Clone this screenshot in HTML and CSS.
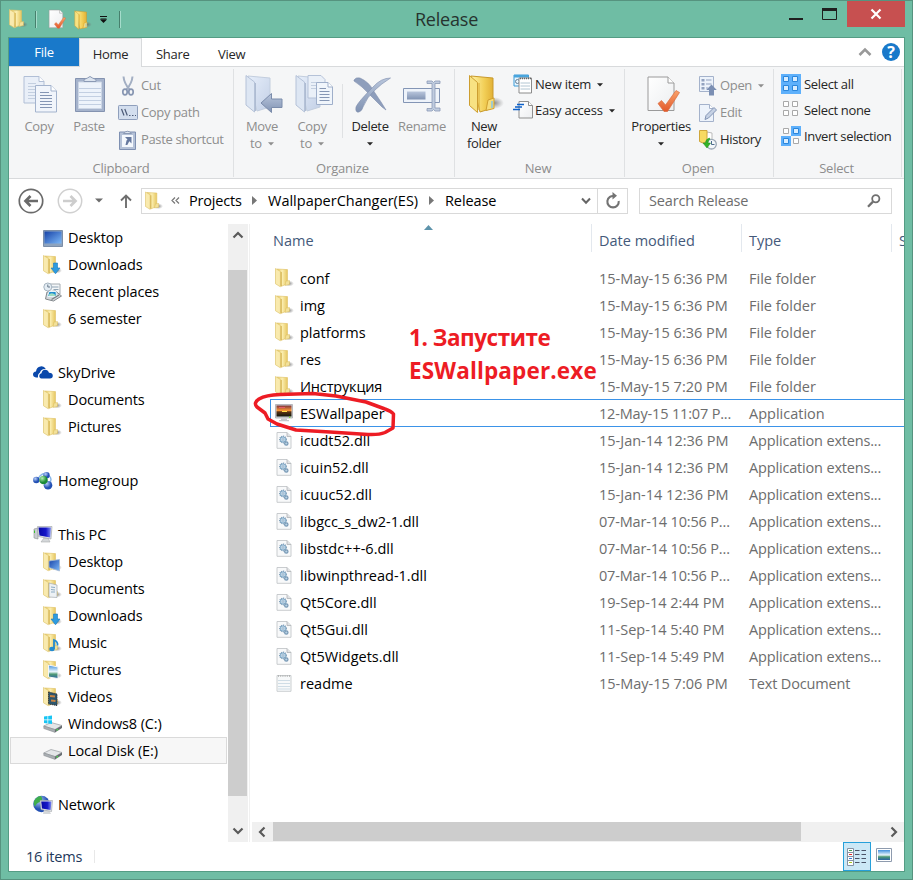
FILE: index.html
```html
<!DOCTYPE html>
<html lang="en">
<head>
<meta charset="utf-8">
<title>Release</title>
<link rel="stylesheet" href="styles.css">
</head>
<body>
<svg class="defs" width="0" height="0" aria-hidden="true">
  <defs>
    <linearGradient id="gy" x1="0" x2="1"><stop offset="0" stop-color="#e9cb69"/><stop offset=".5" stop-color="#fbeeb0"/><stop offset="1" stop-color="#e6c65f"/></linearGradient>
    <linearGradient id="gy2" x1="0" x2="1"><stop offset="0" stop-color="#fff3a8"/><stop offset=".6" stop-color="#f2cf57"/><stop offset="1" stop-color="#e2b136"/></linearGradient>
    <linearGradient id="gb" x1="0" x2="1" y2="1"><stop offset="0" stop-color="#e6eefa"/><stop offset="1" stop-color="#c3d0e6"/></linearGradient>
    <linearGradient id="gb2" x1="0" x2="0" y2="1"><stop offset="0" stop-color="#b9c6dc"/><stop offset="1" stop-color="#8193b3"/></linearGradient>
    <linearGradient id="gscreen" x1="0" x2="1" y2="1"><stop offset="0" stop-color="#1743a8"/><stop offset="1" stop-color="#7db9f8"/></linearGradient>
    <linearGradient id="gpc" x1="0" x2="1"><stop offset="0" stop-color="#0708a5"/><stop offset=".6" stop-color="#1616c9"/><stop offset="1" stop-color="#7f8df2"/></linearGradient>
    <linearGradient id="gsun" x1="0" x2="0" y2="1"><stop offset="0" stop-color="#7c3238"/><stop offset=".45" stop-color="#fb9837"/><stop offset=".58" stop-color="#5c3213"/><stop offset="1" stop-color="#10180f"/></linearGradient>
    <linearGradient id="gpaper" x1="0" x2="1" y2="1"><stop offset="0" stop-color="#fff"/><stop offset="1" stop-color="#eceef0"/></linearGradient>
    <linearGradient id="gsky" x1="0" x2="0" y2="1"><stop offset="0" stop-color="#3f8fdc"/><stop offset=".5" stop-color="#eaf6fd"/><stop offset=".68" stop-color="#4f9a74"/><stop offset="1" stop-color="#2b63a5"/></linearGradient>
    <radialGradient id="gblue" cx=".35" cy=".3"><stop offset="0" stop-color="#b9d0fb"/><stop offset="1" stop-color="#2350b4"/></radialGradient>
    <radialGradient id="ggreen" cx=".35" cy=".3"><stop offset="0" stop-color="#b5f0b0"/><stop offset="1" stop-color="#1b8b36"/></radialGradient>
    <linearGradient id="gor" x1="0" x2="0" y2="1"><stop offset="0" stop-color="#f9a36c"/><stop offset="1" stop-color="#e2582a"/></linearGradient>
    <radialGradient id="gsh"><stop offset="0" stop-color="#555" stop-opacity=".7"/><stop offset="1" stop-color="#777" stop-opacity="0"/></radialGradient>
  </defs>
  <symbol id="folder" viewBox="0 0 19 20">
    <ellipse cx="14" cy="15.500" rx="5" ry="3" fill="url(#gsh)"/>
    <path d="M2 1 12.500 1.600V15.800L6 18.400Z" fill="url(#gy)" stroke="#dfc164" stroke-width=".6"/>
    <path d="M11 13 14.500 12.600V16.600L10 17.400Z" fill="#f3e19a" stroke="#d9bb59" stroke-width=".5"/>
    <path d="M.5.5 5.400 3.400V18.800L.5 15.800Z" fill="#f9eaae" stroke="#e0c56f" stroke-width=".7"/>
    <path d="M6.200 4V18" stroke="#cfa943" stroke-width=".9"/>
  </symbol>
  <symbol id="folder-big" viewBox="0 0 36 40">
    <ellipse cx="26" cy="29" rx="10" ry="6" fill="url(#gsh)"/>
    <path d="M3 2 25 4V34L12 38Z" fill="url(#gy2)" stroke="#c99a2c"/>
    <path d="M20 26 26 24V34.500L18 36.500Z" fill="#f6dc78" stroke="#d0a030"/>
    <path d="M24 27V34" stroke="#7fc3ee" stroke-width="1.400"/>
    <path d="M1.500 1.500 9.500 8.500V38.500L1.500 31.500Z" fill="#f8e282" stroke="#cd9e30"/>
    <path d="M11 9V36" stroke="#e1b53c" stroke-width="2" opacity=".6"/>
  </symbol>
  <symbol id="folder-blue" viewBox="0 0 38 40">
    <path d="M3 2 25 4V33L12 37Z" fill="url(#gb)" stroke="#c3cede"/>
    <path d="M1 1.500 9.500 8V38L1 31Z" fill="#dde6f3" stroke="#b5c2d8"/>
    <path d="M10.500 9V37" stroke="#aebcd2"/>
  </symbol>
  <symbol id="check-page" viewBox="0 0 34 38">
    <path d="M2 2H22L28 8V35.500H2Z" fill="url(#gpaper)" stroke="#9a9a9a"/>
    <path d="M22 2V8H28" fill="#fff" stroke="#9a9a9a"/>
    <path d="M12 28.500 15.500 25.500 19.500 30 30 15.500 33.500 17.500 21.500 36.500H18Z" fill="url(#gor)" stroke="#d86c40" stroke-width=".7"/>
  </symbol>
  <symbol id="doc" viewBox="0 0 16 18">
    <path d="M1 1.500H11L15 5.500V17.300H1Z" fill="#f8f9fa" stroke="#c3c6c9" stroke-width=".9"/>
    <path d="M11 1.500V5.500H15" fill="#e0e2e4" stroke="#b0b3b6" stroke-width=".8"/>
  </symbol>
  <symbol id="dll" viewBox="0 0 16 18">
    <use href="#doc"/>
    <circle cx="7" cy="8.500" r="3.300" fill="none" stroke="#7798b4" stroke-width="1.200" stroke-dasharray="1.100 .8"/>
    <circle cx="7" cy="8.500" r="2.600" fill="#cfe2f0" stroke="#7ba6c6" stroke-width="1"/>
    <circle cx="7" cy="8.500" r=".9" fill="#fff" stroke="#5d87a9" stroke-width=".6"/>
    <circle cx="10.300" cy="12.500" r="1.700" fill="#b9d3e6" stroke="#7798b4" stroke-width="1.200"/>
  </symbol>
  <symbol id="txt" viewBox="0 0 16 18">
    <path d="M1 1.500H15V17.300H1Z" fill="#f7f9fa" stroke="#c5c9cc" stroke-width=".9"/>
    <path d="M2 2H14" stroke="#aaa" stroke-width="1.600" stroke-dasharray="1 1.200"/>
    <path d="M2 6.500H14M2 9.500H14M2 12.500H14M2 15H14" stroke="#cfdde6" stroke-width="1.200"/>
  </symbol>
  <symbol id="pages" viewBox="0 0 34 38">
    <path d="M1 1.500H16L21 6.500V28H1Z" fill="#e9eff8" stroke="#b1bfd6"/>
    <path d="M16 1.500V6.500H21" fill="#fff" stroke="#b1bfd6"/>
    <path d="M5 8.500H13M5 11.500H13M5 14.500H13M5 17.500H13M5 20.500H13M5 23.500H13" stroke="#c3cfe0"/>
    <path d="M12.500 10.500H28L33.500 16V37H12.500Z" fill="#f1f5fb" stroke="#a3b3cd"/>
    <path d="M28 10.500V16H33.500" fill="#fff" stroke="#a3b3cd"/>
    <path d="M17 17.500H26M17 20.500H29M17 23.500H29M17 26.500H29M17 29.500H29M17 32.500H29" stroke="#8596b4"/>
  </symbol>
  <symbol id="dd" viewBox="0 0 6 4"><path d="M0 .3H6L3 3.600Z" fill="currentColor"/></symbol>
  <symbol id="down-arrow" viewBox="0 0 19 20"><path d="M10.500 8H14.500V13H17L12.500 18.800 8 13H10.500Z" fill="#2d9be0" stroke="#1a78bd" stroke-width=".6"/></symbol>
  <symbol id="drive" viewBox="0 0 20 18">
    <path d="M.8 11 8 7.500 19 10.500 12 14.600Z" fill="#e4e6e8" stroke="#989ca0" stroke-width=".7"/>
    <path d="M.8 11V13.500L12 17.400V14.600Z" fill="#a9aeb2" stroke="#85898c" stroke-width=".5"/>
    <path d="M12 14.600 19 10.500V13L12 17.400Z" fill="#686e72"/>
    <path d="M13.500 15.300 15 14.400" stroke="#4be04b" stroke-width="1.300"/>
  </symbol>
</svg>

<div class="window">
  <header class="titlebar">
    <div class="quick">
      <svg class="q1" width="19" height="20"><use href="#folder"/></svg>
      <i class="qsep"></i>
      <svg class="q2" width="18" height="20"><use href="#check-page"/></svg>
      <svg class="q3" width="16" height="19" viewBox="0 0 32 38"><use href="#folder-big" width="36" height="40"/></svg>
      <svg class="q4" width="7" height="8" viewBox="0 0 7 8"><path d="M0 .5H7M.5 3H6.500" stroke="#111"/><path d="M0 3.500H7L3.500 7Z" fill="#111"/></svg>
      <i class="qsep q5"></i>
    </div>
    <h1>Release</h1>
    <div class="controls">
      <svg class="min" width="14" height="2"><rect width="14" height="2" fill="#1f1f1f"/></svg>
      <svg class="max" width="15" height="12"><path d="M.5.5H14.500V11.500H.5Z" fill="none" stroke="#1f1f1f"/><path d="M0 0H15V3H0Z" fill="#1f1f1f"/></svg>
      <span class="close"><svg width="12" height="10" viewBox="0 0 12 10"><path d="M1.500.5 10.500 9.500M10.500.5 1.500 9.500" stroke="#fff" stroke-width="2.200"/></svg></span>
    </div>
  </header>

  <main class="client">
    <nav class="tabs">
      <span class="tab file">File</span>
      <span class="tab home">Home</span>
      <span class="tab share">Share</span>
      <span class="tab view">View</span>
      <span class="tabright">
        <svg width="14" height="9" viewBox="0 0 14 9"><path d="M1.500 7 7 1.500 12.500 7" fill="none" stroke="#999" stroke-width="2.600"/></svg>
        <span class="help">?</span>
      </span>
    </nav>

    <section class="ribbon">
      <div class="group g-clip">
        <div class="items">
          <div class="big off"><svg width="34" height="38"><use href="#pages"/></svg><span>Copy</span></div>
          <div class="big off"><svg width="32" height="38" viewBox="0 0 32 38"><path d="M1.500 3.500H30.500V36.500H1.500Z" fill="#a5b3cc" stroke="#8493b0"/><path d="M4.500 7H27.500V33.500H4.500Z" fill="#edf3fb" stroke="#cdd7e6"/><path d="M5 13.500H27M5 17.500H27M5 21.500H27M5 25.500H27M5 29.500H27" stroke="#c2cfe2"/><path d="M10 6.500V4.500L13.500 3Q16 0 18.500 3L22 4.500V6.500Z" fill="#dce4ef" stroke="#8b9ab5"/></svg><span>Paste</span></div>
          <div class="smalls r27 c1">
            <div class="small off"><svg width="20" height="20" viewBox="0 0 20 20"><path d="M5.500.5Q6 7 11.500 13.500M14.500.5Q14 7 8.500 13.500" fill="none" stroke="#a3afc3" stroke-width="2"/><ellipse cx="7" cy="16" rx="2.200" ry="2.800" fill="none" stroke="#8796b2" stroke-width="1.700"/><ellipse cx="13" cy="16" rx="2.200" ry="2.800" fill="none" stroke="#8796b2" stroke-width="1.700"/></svg><span>Cut</span></div>
            <div class="small off"><svg width="20" height="16" viewBox="0 0 20 16"><rect x=".5" y=".5" width="19" height="14" rx=".8" fill="#d3deee" stroke="#8f9fbc"/><path d="M3.500 4 6 10.500M6.800 4 9.300 10.500M11 10.500H12.500M14 10.500H15.500M17 10.500H18" stroke="#4c5b78" stroke-width="1.200"/></svg><span>Copy path</span></div>
            <div class="small off"><svg width="20" height="20" viewBox="0 0 20 20"><path d="M1.500 2H17.500V19.500H1.500Z" fill="#b4c1d7" stroke="#7e90b2"/><path d="M4 5H15V17H4Z" fill="#f4f8fd"/><path d="M5.500 3.500Q9.500-1 13.500 3.500Z" fill="#dce4ef" stroke="#8b9ab5"/><path d="M7 7H13.500V13.500L11.300 11.300 9.300 15H7.500L8.500 10.500 9.500 9.500Z" fill="#66799f"/></svg><span>Paste shortcut</span></div>
          </div>
        </div>
        <div class="caption">Clipboard</div>
      </div>

      <div class="group g-org">
        <div class="items">
          <div class="big off"><svg width="38" height="40"><use href="#folder-blue"/><path d="M16 29 26.500 19.500V25H37V33.500H26.500V38.500Z" fill="url(#gb2)" stroke="#7b8cab"/></svg><span>Move<br>to <svg class="dd" width="6" height="4"><use href="#dd"/></svg></span></div>
          <div class="big off"><svg width="38" height="40"><use href="#folder-blue"/><path d="M13 1.500H26L30 5.500V24H13Z" fill="#eaf0f8" stroke="#b5c2d8"/><path d="M16 8.500H24M16 11.500H24M16 14.500H22" stroke="#c3cfe0"/><path d="M21.500 8.500H33L37.500 13V30.500H21.500Z" fill="#f0f5fb" stroke="#9fafca"/><path d="M33 8.500V13H37.500" fill="#fff" stroke="#9fafca"/><path d="M24.500 14.500H31M24.500 17.500H34.500M24.500 20.500H34.500M24.500 23.500H34.500M24.500 26.500H34.500" stroke="#8596b4"/></svg><span>Copy<br>to <svg class="dd" width="6" height="4"><use href="#dd"/></svg></span></div>
          <i class="isep"></i>
          <div class="big"><svg width="38" height="38" viewBox="0 0 38 38"><path d="M1 5Q3 2 7 3 16 7 20 15L28 27 33 35 29 32 17 20Q9 11 1 6Z" fill="#8e9ebc" stroke="#7d8dac" stroke-width=".6"/><path d="M37.500 3Q28 3 20 12 5 27 3 32 2 38 6 37 9 36 10 32 14 22 22 15 28 9 37.500 3Z" fill="url(#gb2)" stroke="#7d8dac" stroke-width=".6"/></svg><span>Delete<br><svg class="dd mid" width="6" height="4"><use href="#dd"/></svg></span></div>
          <div class="big off wide"><svg width="38" height="38" viewBox="0 0 38 38"><path d="M.5 13.500H36.500V27.500H.5Z" fill="#eef3fa" stroke="#8395b5"/><path d="M4 16.500H22.500V24.500H4Z" fill="url(#gb2)"/><path d="M24 6H29L30.500 7.500 32 6H37V8.500H32V33H37V36H32L30.500 34.500 29 36H24V33.500H29V8.500H24Z" fill="#c0ccdf" stroke="#8a9ab6" stroke-width=".8"/></svg><span>Rename</span></div>
        </div>
        <div class="caption">Organize</div>
      </div>

      <div class="group g-new">
        <div class="items">
          <div class="big"><svg width="36" height="40"><use href="#folder-big"/></svg><span>New<br>folder</span></div>
          <div class="smalls r26">
            <div class="small"><svg width="20" height="20" viewBox="0 0 20 20"><path d="M1 1H15.500V12H1Z" fill="#eaf6fd" stroke="#3a9bd8"/><path d="M1 1H15.500V3.500H1Z" fill="#49a5dd"/><circle cx="4.500" cy="7.500" r="2" fill="none" stroke="#5f7d9a"/><path d="M6 4H18.500V19H6Z" fill="#fff" stroke="#8b8b8b"/><path d="M7 4.500H18" stroke="#666" stroke-width="1.500" stroke-dasharray="1 1"/><path d="M7.500 9H17M7.500 12H17M7.500 15H17" stroke="#b2c6d2"/></svg><span>New item <svg class="dd" width="6" height="4"><use href="#dd"/></svg></span></div>
            <div class="small"><svg width="20" height="20" viewBox="0 0 20 20"><path d="M6 1.500H15.500L19.500 5.500V18H6Z" fill="url(#gpaper)" stroke="#8f8f8f"/><path d="M15.500 1.500V5.500H19.500" fill="#fff" stroke="#8f8f8f"/><path d="M4 4.500H11M2 7H9M0 9.500H7" stroke="#0e61c9" stroke-width="1.300"/></svg><span>Easy access <svg class="dd" width="6" height="4"><use href="#dd"/></svg></span></div>
          </div>
        </div>
        <div class="caption">New</div>
      </div>

      <div class="group g-open">
        <div class="items">
          <div class="big"><svg width="34" height="38"><use href="#check-page"/></svg><span>Properties<br><svg class="dd mid" width="6" height="4"><use href="#dd"/></svg></span></div>
          <div class="smalls r27">
            <div class="small off"><svg width="18" height="20" viewBox="0 0 18 20"><path d="M.5.5H14.500V15.500H.5Z" fill="#edf3fb" stroke="#a4b2cb"/><path d="M2.500 3H5.500V5.500H2.500ZM2.500 7H5.500V9.500H2.500ZM2.500 11H5.500V13.500H2.500Z" fill="#92a2bf"/><path d="M7 4H12.500M7 8H12.500M7 12H9" stroke="#92a2bf" stroke-width="1.200"/><path d="M12.500 8.500 17.800 14H15V19.500H10V14H7.200Z" fill="#7b8fb3"/></svg><span>Open <svg class="dd" width="6" height="4"><use href="#dd"/></svg></span></div>
            <div class="small off"><svg width="18" height="20" viewBox="0 0 18 20"><path d="M.5 1.500H10.500L14.500 5.500V18.500H.5Z" fill="#edf3fb" stroke="#a4b2cb"/><path d="M10.500 1.500V5.500H14.500" fill="#fff" stroke="#a4b2cb"/><path d="M6 16.500 7 12.500 15 4.500 17.500 7 9.500 15Z" fill="#c5d1e4" stroke="#8395b5"/></svg><span>Edit</span></div>
            <div class="small"><svg width="18" height="20" viewBox="0 0 18 20"><path d="M8 2 13 3V14H6Z" fill="#fff" stroke="#bbb"/><path d="M.5.5H8V11.500L4 13 .5 11.500Z" fill="#f7da62" stroke="#cfa63a"/><circle cx="12.500" cy="14.200" r="4.800" fill="#f3f7fa" stroke="#9aa7b4" stroke-width="1.300"/><path d="M12.500 11V14.500H15.500" fill="none" stroke="#4d6d8d"/><path d="M10.500 8Q6.500 9 6.500 13H4L8 18 11.500 13H9Q9 10 11 9Z" fill="#35b228" stroke="#1b8c19" stroke-width=".5"/></svg><span>History</span></div>
          </div>
        </div>
        <div class="caption">Open</div>
      </div>

      <div class="group g-sel">
        <div class="items">
          <div class="smalls r26">
            <div class="small"><svg width="20" height="20" viewBox="0 0 20 20"><path d="M0 0H20V20H0Z" fill="#5eb0fb"/><path d="M2.500 2.500H7.500V7.500H2.500ZM11.500 2.500H16.500V7.500H11.500ZM2.500 11.500H7.500V16.500H2.500ZM11.500 11.500H16.500V16.500H11.500Z" fill="#d9edff" stroke="#2a86dc"/></svg><span>Select all</span></div>
            <div class="small"><svg width="20" height="20" viewBox="0 0 20 20"><path d="M2.500 1.500H7.500V6.500H2.500ZM11.500 1.500H16.500V6.500H11.500ZM2.500 10.500H7.500V15.500H2.500ZM11.500 10.500H16.500V15.500H11.500Z" fill="#fff" stroke="#a9a9a9"/></svg><span>Select none</span></div>
            <div class="small"><svg width="20" height="20" viewBox="0 0 20 20"><path d="M10 0H20V10H10ZM0 10H10V20H0Z" fill="#5eb0fb"/><path d="M2.500 2.500H7.500V7.500H2.500ZM12.500 12.500H17.500V17.500H12.500Z" fill="#fff" stroke="#a9a9a9"/><path d="M12.500 2.500H17.500V7.500H12.500ZM2.500 12.500H7.500V17.500H2.500Z" fill="#d9edff" stroke="#2a86dc"/></svg><span>Invert selection</span></div>
          </div>
        </div>
        <div class="caption">Select</div>
      </div>
    </section>

    <section class="address">
      <svg class="a1" width="26" height="26" viewBox="0 0 26 26"><circle cx="13" cy="13" r="11.700" fill="none" stroke="#6a6a6a" stroke-width="1.700"/><path d="M20 13H8M12.500 8 7.500 13 12.500 18" fill="none" stroke="#6a6a6a" stroke-width="2.700"/></svg>
      <svg class="a2" width="26" height="26" viewBox="0 0 26 26"><circle cx="13" cy="13" r="11.700" fill="none" stroke="#d0d0d0" stroke-width="1.500"/><path d="M6 13H18M13.500 8 18.500 13 13.500 18" fill="none" stroke="#cdcdcd" stroke-width="2.700"/></svg>
      <svg class="a3" width="8" height="5" viewBox="0 0 8 5"><path d="M0 .5H8L4 4.500Z" fill="#6d6d6d"/></svg>
      <svg class="a4" width="12" height="14" viewBox="0 0 12 14"><path d="M6 14V2M1 6.500 6 1.500 11 6.500" fill="none" stroke="#6f6f6f" stroke-width="1.900"/></svg>
      <div class="crumbs">
        <svg class="cf" width="18" height="20"><use href="#folder"/></svg>
        <svg class="cc" width="9" height="7" viewBox="0 0 9 7"><path d="M4 .5 1 3.500 4 6.500M8 .5 5 3.500 8 6.500" fill="none" stroke="#777" stroke-width="1.200"/></svg>
        <span class="w1">Projects</span>
        <svg class="ca" width="5" height="9" viewBox="0 0 5 9"><path d="M0 0 5 4.500 0 9Z" fill="#777"/></svg>
        <span class="w2">WallpaperChanger(ES)</span>
        <svg class="ca" width="5" height="9" viewBox="0 0 5 9"><path d="M0 0 5 4.500 0 9Z" fill="#777"/></svg>
        <span class="w3">Release</span>
        <svg class="cd" width="10" height="8" viewBox="0 0 10 8"><path d="M1 1.500 5 5.800 9 1.500" fill="none" stroke="#666" stroke-width="2"/></svg>
        <span class="refresh"><svg width="16" height="17" viewBox="0 0 16 17"><path d="M9.500 4.200A5.700 5.700 0 1 0 13.700 9" fill="none" stroke="#737373" stroke-width="2.100"/><path d="M7.500 0V7.500L12 3.800Z" fill="#737373"/></svg></span>
      </div>
      <div class="search"><span>Search Release</span><svg width="14" height="14" viewBox="0 0 14 14"><circle cx="8.800" cy="4.800" r="3.600" fill="none" stroke="#707070" stroke-width="1.800"/><path d="M6 7.600 1 12.800" stroke="#707070" stroke-width="2.300"/></svg></div>
    </section>

    <section class="body">
      <aside class="tree">
        <div class="node"><svg width="20" height="20" viewBox="0 0 20 20"><path d="M.5 2.500H19.500V18.500H.5Z" fill="#8ea3bd" stroke="#7b8ea8"/><path d="M1.500 3.500H18.500V15.500H1.500Z" fill="url(#gscreen)"/></svg><span>Desktop</span></div>
        <div class="node"><svg width="19" height="20"><use href="#folder" width="19"/><use href="#down-arrow" width="19"/></svg><span>Downloads</span></div>
        <div class="node"><svg width="19" height="20" viewBox="0 0 19 20"><path d="M6 2H16.500V12H6Z" fill="#f3f6f8" stroke="#a5acb2"/><path d="M8 5H15M10 7.500H15" stroke="#8fa4b4"/><path d="M3.500 10 12 9 18 14 10 19 2 17Z" fill="#d3d7da" stroke="#84898d"/><path d="M5.500 9.500H12.500L13 14.500H4Z" fill="#208ed0" stroke="#e8f3fa"/><path d="M6 12Q9 10 12 13L12.500 14H4.800Z" fill="#9fdcc0"/><path d="M8 17.500 15.500 13" stroke="#777d82" stroke-width="1.300"/><circle cx="4.300" cy="5" r="4" fill="#e4edf4" stroke="#a6b4c0"/><path d="M4.300 2.500V5H6.500" fill="none" stroke="#678"/></svg><span>Recent places</span></div>
        <div class="node"><svg width="19" height="20"><use href="#folder" width="19"/></svg><span>6 semester</span></div>
        <div class="node top gap"><svg width="20" height="20" viewBox="0 0 20 20"><path d="M5 14.500H3Q0 14 0 11.300 0 9 3 8.500 3.500 4 7.500 3.500 11 2.800 12.800 6 8 5.500 7 9.500 4.500 11 5 14.500Z" fill="#0a48ab"/><path d="M8.500 15.500Q6 15 6.300 12.500 6.500 10.600 8.500 10.300 9 7 12 6.800 15 6.800 16 9.800 19.800 10 19.800 12.800 19.700 15.500 17 15.500Z" fill="#0a48ab"/></svg><span>SkyDrive</span></div>
        <div class="node"><svg width="19" height="20"><use href="#folder" width="19"/></svg><span>Documents</span></div>
        <div class="node"><svg width="19" height="20"><use href="#folder" width="19"/></svg><span>Pictures</span></div>
        <div class="node top gap"><svg width="20" height="20" viewBox="0 0 20 20"><path d="M5 8Q9 0 15 4T15 14" fill="none" stroke="#8ab8e8" stroke-width="1.500"/><circle cx="3.300" cy="9" r="3.200" fill="url(#gblue)"/><circle cx="13.500" cy="4.300" r="3.200" fill="url(#gblue)"/><circle cx="15" cy="14.300" r="4.300" fill="url(#gblue)"/><circle cx="10.500" cy="9" r="4.300" fill="url(#ggreen)"/></svg><span>Homegroup</span></div>
        <div class="node top gap"><svg width="20" height="20" viewBox="0 0 20 20"><path d="M1 4 5 3V14L1 13Z" fill="#c9cdd0" stroke="#8b8f92" stroke-width=".6"/><path d="M1.500 5.500V8" stroke="#3bbf30"/><path d="M11 13H15L17 17H8Z" fill="#d5d8da" stroke="#a8abad" stroke-width=".6"/><path d="M4.500 1.500H19L18 14 5.500 11.500Z" fill="#e3e6e9" stroke="#9a9da2" stroke-width=".6"/><path d="M5.500 2.500H18L17.200 12.500 6.500 10.500Z" fill="url(#gpc)"/></svg><span>This PC</span></div>
        <div class="node"><svg width="19" height="20"><use href="#folder" width="19"/><path d="M6 9 16.500 7.500V19L6 15.500Z" fill="url(#gscreen)" stroke="#a6bad2" stroke-width=".8"/></svg><span>Desktop</span></div>
        <div class="node"><svg width="19" height="20"><use href="#folder" width="19"/><path d="M6 4 14 6V18.500L6 18Z" fill="#edf1f4" stroke="#a5abb0" stroke-width=".7"/><path d="M8 8 12 8.500M8 10.500 12 11M8 13H12" stroke="#8babc5"/></svg><span>Documents</span></div>
        <div class="node"><svg width="19" height="20"><use href="#folder" width="19"/><use href="#down-arrow" width="19"/></svg><span>Downloads</span></div>
        <div class="node"><svg width="19" height="20"><use href="#folder" width="19"/><path d="M11 16V7Q15 8.500 14.500 12.500" fill="none" stroke="#248bd0" stroke-width="1.800"/><ellipse cx="9" cy="16" rx="2.700" ry="2.200" fill="#248bd0"/></svg><span>Music</span></div>
        <div class="node"><svg width="19" height="20"><use href="#folder" width="19"/><path d="M5.500 5 15 7V18.500L5.500 17Z" fill="url(#gsky)" stroke="#f4f6f8"/></svg><span>Pictures</span></div>
        <div class="node"><svg width="19" height="20"><use href="#folder" width="19"/><path d="M5.500 5 14 7V18.500L5.500 17Z" fill="#2c566e" stroke="#333" stroke-width="1" stroke-dasharray="1.200 .8"/><path d="M7 9 12 9.500M8 13.500 12.500 14" stroke="#c98343" stroke-width="2"/></svg><span>Videos</span></div>
        <div class="node"><svg width="20" height="20" viewBox="0 0 20 20"><use href="#drive" y="1" width="20" height="18"/><path d="M1 2.500 4.500 2V5.500H1ZM5.200 2 9 1.500V5.500H5.200ZM1 6.200H4.500V9.500L1 9ZM5.200 6.200H9V10L5.200 9.600Z" fill="#18c5f4"/></svg><span>Windows8 (C:)</span></div>
        <div class="node current"><svg width="20" height="20" viewBox="0 0 20 20"><use href="#drive" y="1" width="20" height="18"/></svg><span>Local Disk (E:)</span></div>
        <div class="node top gap"><svg width="20" height="20" viewBox="0 0 20 20"><circle cx="8.500" cy="9" r="8.300" fill="url(#gblue)"/><path d="M1 6Q4 1 8 1 11 5 7 7 3 8 2 12 0 9 1 6Z" fill="#3fae4c"/><path d="M11 15H16L18 19H10Z" fill="#d5d8da"/><path d="M7 5.500H19.500L18.500 16.500 8 14.500Z" fill="#e3e6e9" stroke="#9a9da2" stroke-width=".6"/><path d="M8.200 6.500H18.500L17.600 15 9 13.500Z" fill="url(#gpc)"/></svg><span>Network</span></div>
      </aside>
      <div class="vscroll">
        <svg width="12" height="8" viewBox="0 0 12 8"><path d="M1.500 6.500 6 2 10.500 6.500" fill="none" stroke="#5a5a5a" stroke-width="2.200"/></svg>
        <i></i>
        <svg width="12" height="8" viewBox="0 0 12 8"><path d="M1.500 1.500 6 6 10.500 1.500" fill="none" stroke="#5a5a5a" stroke-width="2.200"/></svg>
      </div>
      <div class="pane">
        <div class="head">
          <span class="h1">Name</span><span class="h2">Date modified</span><span class="h3">Type</span><span class="h4">Size</span>
          <svg class="sort" width="9" height="5" viewBox="0 0 9 5"><path d="M0 5 4.500 0 9 5Z" fill="#5d93ab"/></svg>
        </div>
        <div class="rows">
          <div class="row"><svg width="19" height="20"><use href="#folder"/></svg><b>conf</b><span>15-May-15 6:36 PM</span><em>File folder</em></div>
          <div class="row"><svg width="19" height="20"><use href="#folder"/></svg><b>img</b><span>15-May-15 6:36 PM</span><em>File folder</em></div>
          <div class="row"><svg width="19" height="20"><use href="#folder"/></svg><b>platforms</b><span>15-May-15 6:36 PM</span><em>File folder</em></div>
          <div class="row"><svg width="19" height="20"><use href="#folder"/></svg><b>res</b><span>15-May-15 6:36 PM</span><em>File folder</em></div>
          <div class="row"><svg width="19" height="20"><use href="#folder"/></svg><b class="tight">Инструкция</b><span>15-May-15 7:20 PM</span><em>File folder</em></div>
          <div class="row selected"><svg width="18" height="20" viewBox="0 0 18 20"><path d="M.5 1.500H17.500V15H.5Z" fill="#d5d7da" stroke="#a0a3a8" stroke-width=".7"/><path d="M1.500 2.500H16.500V13.500H1.500Z" fill="url(#gsun)"/><path d="M4 4.500H10" stroke="#e4596b"/><path d="M7 8.500H12" stroke="#ffe04a"/><circle cx="14.700" cy="14.200" r=".8" fill="#7ade22"/><path d="M6 15.500H12V17H14V18.300H4V17H6Z" fill="#c5c8cb"/></svg><b>ESWallpaper</b><span class="tight">12-May-15 11:07 P...</span><em>Application</em></div>
          <div class="row"><svg width="18" height="18"><use href="#dll"/></svg><b>icudt52.dll</b><span>15-Jan-14 12:36 PM</span><em class="tight">Application extens...</em></div>
          <div class="row"><svg width="18" height="18"><use href="#dll"/></svg><b>icuin52.dll</b><span>15-Jan-14 12:36 PM</span><em class="tight">Application extens...</em></div>
          <div class="row"><svg width="18" height="18"><use href="#dll"/></svg><b>icuuc52.dll</b><span>15-Jan-14 12:36 PM</span><em class="tight">Application extens...</em></div>
          <div class="row"><svg width="18" height="18"><use href="#dll"/></svg><b>libgcc_s_dw2-1.dll</b><span class="tight">07-Mar-14 10:56 P...</span><em class="tight">Application extens...</em></div>
          <div class="row"><svg width="18" height="18"><use href="#dll"/></svg><b>libstdc++-6.dll</b><span class="tight">07-Mar-14 10:56 P...</span><em class="tight">Application extens...</em></div>
          <div class="row"><svg width="18" height="18"><use href="#dll"/></svg><b>libwinpthread-1.dll</b><span class="tight">07-Mar-14 10:56 P...</span><em class="tight">Application extens...</em></div>
          <div class="row"><svg width="18" height="18"><use href="#dll"/></svg><b>Qt5Core.dll</b><span>19-Sep-14 2:44 PM</span><em class="tight">Application extens...</em></div>
          <div class="row"><svg width="18" height="18"><use href="#dll"/></svg><b>Qt5Gui.dll</b><span>11-Sep-14 5:40 PM</span><em class="tight">Application extens...</em></div>
          <div class="row"><svg width="18" height="18"><use href="#dll"/></svg><b>Qt5Widgets.dll</b><span>11-Sep-14 5:49 PM</span><em class="tight">Application extens...</em></div>
          <div class="row"><svg width="18" height="18"><use href="#txt"/></svg><b>readme</b><span>15-May-15 7:06 PM</span><em class="tight">Text Document</em></div>
        </div>
        <div class="hscroll">
          <svg width="8" height="12" viewBox="0 0 8 12"><path d="M6.500 1.500 2 6 6.500 10.500" fill="none" stroke="#5a5a5a" stroke-width="2.200"/></svg>
          <i></i>
          <svg width="8" height="12" viewBox="0 0 8 12"><path d="M1.500 1.500 6 6 1.500 10.500" fill="none" stroke="#5a5a5a" stroke-width="2.200"/></svg>
        </div>
      </div>
    </section>

    <footer class="status">
      <span class="tight">16 items</span><i></i>
      <div class="views">
        <span class="v1"><svg width="20" height="18" viewBox="0 0 20 18"><path d="M.5.5H6.500V17.500H.5ZM.5 4.500H6.500M.5 8.500H6.500M.5 12.500H6.500" fill="#fff" stroke="#8592a3"/><path d="M8 2.500H12.500M14.500 2.500H19M8 6.500H12.500M14.500 6.500H19M8 10.500H12.500M14.500 10.500H19M8 14.500H12.500M14.500 14.500H19" stroke="#4b5468"/><path d="M2 2.500H5" stroke="#3f9b51"/><path d="M2 6.500H5" stroke="#e32f2f"/><path d="M2 10.500H5" stroke="#3578d6"/><path d="M2 14.500H5" stroke="#a9c51d"/></svg></span>
        <span class="v2"><svg width="16" height="14" viewBox="0 0 16 14"><path d="M.5.5H15.500V13.500H.5Z" fill="#fff" stroke="#8e9bae"/><path d="M2 2H14V12H2Z" fill="url(#gsky)"/></svg></span>
      </div>
    </footer>
  </main>

  <p class="note"><span class="n1">1. Запустите</span><br><span class="n2">ESWallpaper.exe</span></p>
  <svg class="loop" width="150" height="54" viewBox="250 386 150 54"><path d="M313 393.500 280 394.500Q266 395 259 399 253 403 257 407L265 413 268 419 277 424 296 430 330 432 368 434.500Q379 435 385 432.500L393 428 393.500 414Q391 411 385 409L366 402 336 396Z" fill="none" stroke="#ed1c24" stroke-width="3.500" stroke-linejoin="round"/></svg>
</div>
</body>
</html>
```
FILE: styles.css
```css
* { box-sizing: border-box; }
html, body { margin: 0; }
body {
  width: 913px; height: 880px; overflow: hidden;
  font: 14.5px/20px "Open Sans", "Noto Sans", sans-serif;
  color: #000;
}
svg { display: block; flex: none; overflow: visible; }
.defs { position: absolute; overflow: hidden; }
b, em, i { font-weight: normal; font-style: normal; }
.tight { letter-spacing: -.17px; }

.window { position: relative; width: 913px; height: 880px; background: #6fbda4; border: 1px solid #56937f; padding: 0 7px 7px; }
.titlebar { height: 36px; display: grid; grid-template-columns: 1fr auto 1fr; }
.quick { display: flex; align-items: center; height: 36px; }
.quick svg { flex: none; }
.q1 { margin-left: 1px; }
.qsep { width: 2px; height: 17px; margin-left: 7px; border-left: 1px solid #47806d; border-right: 1px solid #a5dccb; }
.q2 { margin-left: 11px; }
.q3 { margin-left: 8px; }
.q4 { margin: 2px 0 0 10px; }
.q5 { margin-left: 12px; }
h1 { margin: 0 20px 0 0; font-size: 18px; letter-spacing: -.2px; font-weight: 400; line-height: 36px; color: #26332f; }
.controls { display: flex; justify-content: flex-end; }
.min { margin: 17px 19px 0 0; }
.max { margin: 7px 10px 0 0; }
.close { width: 58px; height: 26px; background: #c75050; display: flex; align-items: center; justify-content: center; }

.client { height: 835px; border: 1px solid #549c84; background: #fff; display: flex; flex-direction: column; }
.tabs { height: 29px; display: flex; border-bottom: 1px solid #d8dadc; font-size: 13px; letter-spacing: -.3px; line-height: 29px; color: #262626; flex: none; }
.file { width: 70px; height: 28px; background: #1979ca; color: #fff; text-align: center; }
.home { width: 63px; height: 29px; background: #f5f6f7; border: 1px solid #d8dadc; border-bottom: 0; line-height: 31px; text-align: center; }
.share, .view { line-height: 33px; }
.share { margin-left: 14px; width: 62px; }
.tabright { margin-left: auto; display: flex; align-items: center; gap: 10px; padding-right: 4px; }
.help { width: 18px; height: 18px; border-radius: 50%; background: #1979ca; color: #fff; font-weight: 700; font-size: 16px; line-height: 18px; text-align: center; }

.ribbon { height: 112px; flex: none; display: flex; background: #f5f6f7; border-bottom: 1px solid #d8dadc; font-size: 13px; letter-spacing: -.34px; line-height: 17px; color: #262626; padding-top: 2px; }
.group { height: 108px; border-right: 1px solid #dfe1e3; display: flex; flex-direction: column; flex: none; }
.g-clip { width: 225px; padding-left: 5px; }
.g-org { width: 221px; padding-left: 3px; }
.g-new { width: 170px; padding-left: 3px; }
.g-open { width: 149px; padding-left: 1px; }
.g-sel { width: 128px; padding-left: 7px; }
.items { height: 90px; flex: none; display: flex; }
.caption { text-align: center; color: #8d8d8d; line-height: 18px; letter-spacing: -.2px; }
.g-clip .caption { margin-left: -5px; }
.g-org .caption { margin-left: -6px; }
.g-new .caption { margin-left: -6px; }
.g-open .caption { margin-left: -3px; }
.g-sel .caption { margin-left: -9px; }
.big { width: 50px; display: flex; flex-direction: column; align-items: center; text-align: center; white-space: nowrap; padding-top: 5px; }
.big > svg { height: 40px; margin-left: 2px; }
.big.wide > svg { margin-left: 0; }
.g-org .big:not(.wide) > svg, .g-new .big > svg, .g-open .big > svg { margin-left: 4px; }
.big > span { margin-top: 4px; }
.off { color: #8e8e8e; }
.dd { display: inline-block; vertical-align: 2px; margin-left: 3px; }
.dd.mid { margin: 0; }
.isep { width: 1px; height: 54px; margin: 15px 2px 0 5px; background: #dfe1e3; }
.wide { width: 54px; }
.g-new .big { width: 52px; }
.g-open .big { width: 70px; }
.smalls { margin-left: 3px; white-space: nowrap; }
.g-clip .smalls { margin-left: 4px; }
.g-sel .smalls { margin-left: 0; }
.small { display: flex; align-items: center; gap: 3px; height: 26px; }
.r27 { padding-top: 3px; }
.r27 .small { height: 27px; }
.r26 { padding-top: 2px; }
.g-new .small { gap: 2px; letter-spacing: -.2px; }

.address { height: 45px; flex: none; display: flex; align-items: center; padding-bottom: 2px; }
.a1 { margin-left: 9px; }
.a2 { margin-left: 13px; }
.a3 { margin-left: 12px; }
.a4 { margin-left: 17px; }
.crumbs { margin-left: 9px; width: 487px; height: 26px; border: 1px solid #d9d9d9; display: flex; align-items: center; }
.cf { margin-left: 3px; }
.cc { margin: 0 9px 0 8px; }
.w1 { width: 63px; letter-spacing: -.2px; }
.w2 { width: 161px; margin-left: 11px; }
.w3 { margin-left: 11px; letter-spacing: -.1px; }
.cd { margin-left: auto; margin-right: 6px; }
.refresh { width: 30px; height: 24px; border-left: 1px solid #d9d9d9; display: flex; align-items: center; justify-content: center; }
.search { margin-left: 11px; width: 253px; height: 26px; border: 1px solid #d9d9d9; display: flex; align-items: center; justify-content: space-between; padding: 0 10px 0 9px; color: #6d6d6d; letter-spacing: -.17px; }

.body { height: 618px; flex: none; display: flex; }
.tree { width: 219px; padding-left: 1px; letter-spacing: -.12px; }
.node { width: 217px; height: 27px; display: flex; align-items: center; gap: 5px; padding-left: 32px; border: 1px solid transparent; white-space: nowrap; }
.node svg { width: 20px; }
.top { padding-left: 22px; }
.gap { margin-top: 27px; }
.current { background: #f7f7f7; border-color: #dadada; }
.vscroll { width: 20px; background: #f0f0f0; display: flex; flex-direction: column; align-items: center; padding: 7px 1px 7px 0; }
.vscroll i { width: 19px; height: 526px; margin: 31px 0 auto; background: #cdcdcd; }
.pane { margin-left: 1px; width: 655px; border-left: 1px solid #f0f0f0; display: flex; flex-direction: column; overflow: hidden; }
.head { position: relative; display: flex; flex: none; height: 40px; line-height: 33px; color: #44597a; padding-left: 23px; }
.head span { height: 28px; flex: none; }
.h1 { width: 319px; border-right: 1px solid #e3e8ee; }
.h2 { width: 150px; padding-left: 7px; border-right: 1px solid #e3e8ee; }
.h3 { width: 150px; padding-left: 7px; border-right: 1px solid #e3e8ee; }
.h4 { padding-left: 7px; }
.sort { position: absolute; left: 174px; top: 1px; }
.rows { padding-left: 20px; height: 558px; flex: none; }
.row { height: 27px; padding: 2px 0 0 6px; display: grid; grid-template-columns: 24px 299px 150px 1fr; align-items: center; white-space: nowrap; color: #6d6d6d; }
.row svg { margin-top: -2px; margin-left: -1px; }
.row b { color: #000; }
.selected { height: 28px; margin-bottom: -1px; border: 1px solid #3b93e8; border-right: 0; padding: 1px 0 0 5px; }
.hscroll { height: 20px; flex: none; margin-left: 2px; background: #f0f0f0; display: flex; align-items: center; padding: 0 6px; }
.hscroll i { width: 528px; height: 19px; margin: 0 auto 1px 7px; background: #cdcdcd; }

.status { height: 29px; display: flex; align-items: center; padding-left: 17px; color: #1e395b; }
.status > i { width: 1px; height: 13px; margin-left: 12px; background: #e8e8e8; }
.views { margin-left: auto; height: 29px; display: flex; }
.v1 { width: 28px; height: 29px; background: #cce8f6; border: 1px solid #26a0da; display: flex; align-items: center; justify-content: center; }
.v2 { display: flex; padding: 6px 12px 0 5px; }

.note { position: absolute; left: 408px; top: 320px; margin: 0; font-size: 22.5px; line-height: 33px; font-weight: 700; color: #ed1c24; white-space: nowrap; }
.n1 { letter-spacing: -.45px; }
.n2 { letter-spacing: .15px; }
.loop { position: absolute; left: 249px; top: 385px; }
```
